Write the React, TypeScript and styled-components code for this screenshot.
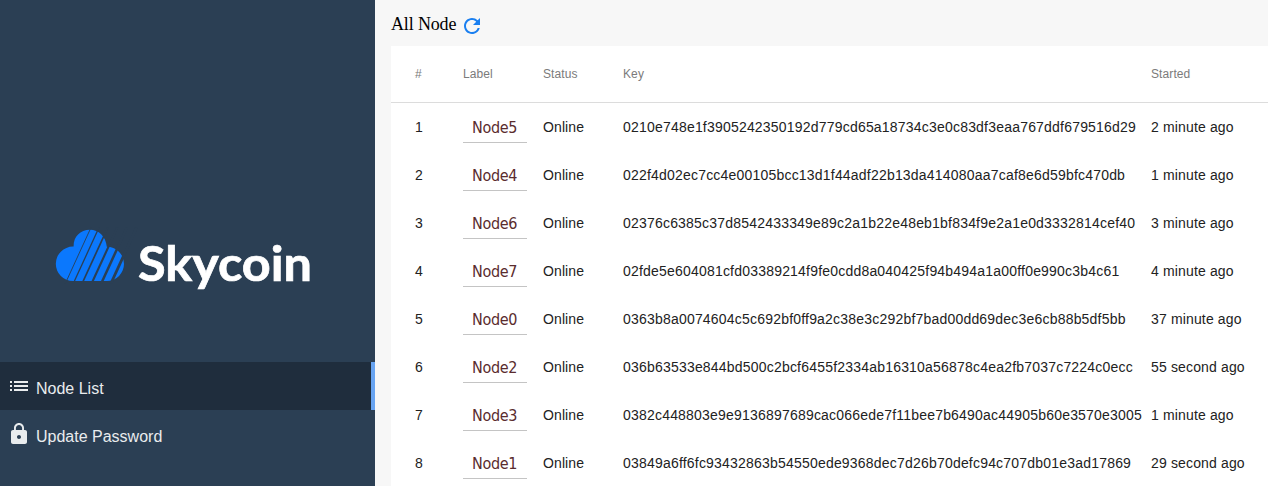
import React from 'react';
import styled, { createGlobalStyle } from 'styled-components';
import { MdList, MdLock, MdRefresh } from 'react-icons/md';

const GlobalStyle = createGlobalStyle`
  * { box-sizing: border-box; }
  html, body { margin: 0; height: 100%; overflow: hidden; }
  body { background: #f7f7f7; font-family: "Liberation Sans", Arial, sans-serif; }
`;

const Page = styled.div`
  display: flex;
  width: 1268px;
  height: 486px;
  overflow: hidden;
`;

const Sidebar = styled.aside`
  flex: 0 0 375px;
  background: #2b3f54;
`;

const Brand = styled.div`
  height: 362px;
  padding: 212px 0 0 40px;
`;

const Logo = styled.svg`
  display: block;
  width: 290px;
  height: 96px;
`;

const Wordmark = styled.text`
  font-family: Lato, sans-serif;
  font-weight: 700;
  font-size: 47px;
  fill: #fff;
  stroke: #fff;
  stroke-width: 0.7px;
`;

const NavItem = styled.a<{ $active?: boolean }>`
  display: flex;
  align-items: center;
  height: 48px;
  padding: 5px 0 0 7px;
  gap: 5px;
  color: #e9ecee;
  font-size: 16px;
  background: ${(p) => (p.$active ? '#1f2d3d' : 'transparent')};
  border-right: 4px solid ${(p) => (p.$active ? '#68a4f2' : 'transparent')};
  svg { margin-bottom: 5px; }
`;

const Main = styled.main`
  flex: 1;
  min-width: 0;
  padding-left: 16px;
`;

const Heading = styled.header`
  display: flex;
  align-items: center;
  gap: 4px;
  height: 46px;
  padding-top: 6px;
  font-family: "Liberation Serif", "Times New Roman", serif;
  font-size: 18px;
  letter-spacing: -0.15px;
  color: #000;
  span { margin-top: -3px; }
`;

const Table = styled.section`
  background: #fff;
  height: 440px;
`;

const Row = styled.div`
  display: grid;
  grid-template-columns: 48px 80px 80px 528px 1fr;
  align-items: center;
  height: 48px;
  padding-left: 24px;
  font-size: 14px;
  color: #222;
  white-space: nowrap;
`;

const HeadRow = styled(Row)`
  height: 57px;
  border-bottom: 1px solid #dcdcdc;
  font-size: 12px;
  color: #7b7b7b;
`;

const Cell = styled.span<{ $spacing?: number }>`
  letter-spacing: ${(p) => p.$spacing ?? 0.1}px;
  padding-bottom: 1px;
`;

const Label = styled.span`
  width: 64px;
  height: 32px;
  padding-left: 9px;
  border-bottom: 1px solid #c4c4c4;
  font-family: "DejaVu Sans Condensed", Tahoma, sans-serif;
  font-size: 16px;
  letter-spacing: -0.3px;
  line-height: 33px;
  color: #5a2c2e;
`;

const nodes = [
  ['Node5', '0210e748e1f3905242350192d779cd65a18734c3e0c83df3eaa767ddf679516d29', '2 minute ago'],
  ['Node4', '022f4d02ec7cc4e00105bcc13d1f44adf22b13da414080aa7caf8e6d59bfc470db', '1 minute ago'],
  ['Node6', '02376c6385c37d8542433349e89c2a1b22e48eb1bf834f9e2a1e0d3332814cef40', '3 minute ago'],
  ['Node7', '02fde5e604081cfd03389214f9fe0cdd8a040425f94b494a1a00ff0e990c3b4c61', '4 minute ago'],
  ['Node0', '0363b8a0074604c5c692bf0ff9a2c38e3c292bf7bad00dd69dec3e6cb88b5df5bb', '37 minute ago'],
  ['Node2', '036b63533e844bd500c2bcf6455f2334ab16310a56878c4ea2fb7037c7224c0ecc', '55 second ago'],
  ['Node3', '0382c448803e9e9136897689cac066ede7f11bee7b6490ac44905b60e3570e3005', '1 minute ago'],
  ['Node1', '03849a6ff6fc93432863b54550ede9368dec7d26b70defc94c707db01e3ad17869', '29 second ago'],
];

// Gaps between the cloud's bands: x at the base line, and thickness.
const bands = [
  [67.3, 0.9], [75.3, 1.3], [84.1, 1.7], [93.6, 2.1], [103.2, 2.5], [112.9, 2.8],
];

export default function App() {
  return (
    <>
      <GlobalStyle />
      <Page>
        <Sidebar>
          <Brand>
            <Logo viewBox="40 212 290 96">
              <path
                fill="#0b78fd"
                d="M73 281a17.2 17.2 0 0 1 0-34.4h.6C73.4 237 80 229.8 90 229.8C98.5 229.8 105.8 236 106.8 246.8A17.1 17.1 0 0 1 107 281Z"
              />
              {bands.map(([x, w]) => (
                <line key={x} x1={x - 2} y1="283.5" x2={x + 23.7} y2="227.5" stroke="#2b3f54" strokeWidth={w} />
              ))}
              <Wordmark x="138" y="281" textLength="174" lengthAdjust="spacingAndGlyphs">Skycoin</Wordmark>
            </Logo>
          </Brand>
          <NavItem $active><MdList size={24} />Node List</NavItem>
          <NavItem><MdLock size={24} />Update Password</NavItem>
        </Sidebar>
        <Main>
          <Heading><span>All Node</span><MdRefresh size={24} color="#1a7ff0" /></Heading>
          <Table>
            <HeadRow>
              <Cell>#</Cell><Cell>Label</Cell><Cell>Status</Cell><Cell>Key</Cell><Cell>Started</Cell>
            </HeadRow>
            {nodes.map(([label, key, started], i) => (
              <Row key={key}>
                <Cell>{i + 1}</Cell>
                <Label>{label}</Label>
                <Cell>Online</Cell>
                <Cell $spacing={0.2}>{key}</Cell>
                <Cell $spacing={0.15}>{started}</Cell>
              </Row>
            ))}
          </Table>
        </Main>
      </Page>
    </>
  );
}
